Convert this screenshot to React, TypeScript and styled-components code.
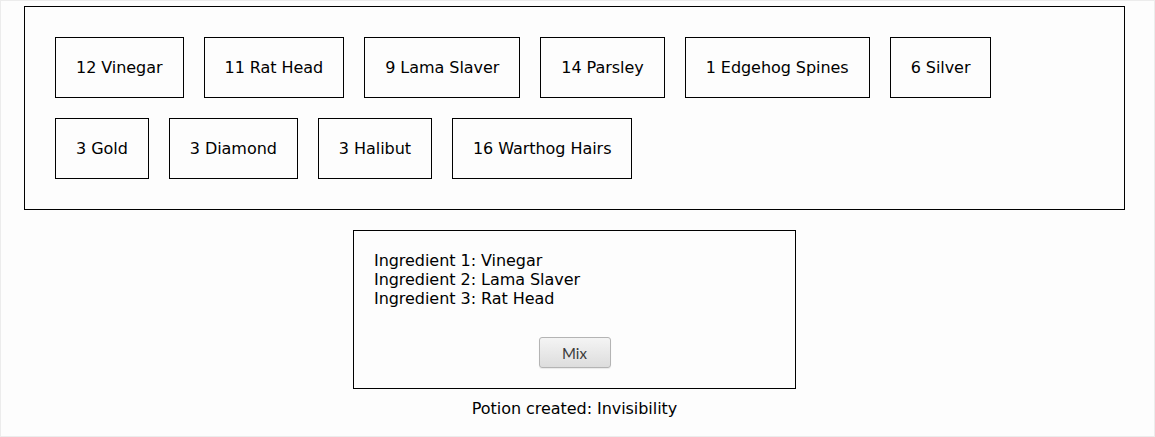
import React from "react";
import styled, { createGlobalStyle } from "styled-components";

const Global = createGlobalStyle`
  html, body { margin: 0; padding: 0; background: #fdfdfd; }
  body { font-family: "DejaVu Sans", sans-serif; font-size: 16px; color: #000; letter-spacing: -0.05px; }
`;

const Page = styled.div`
  box-sizing: border-box;
  width: 1155px;
  height: 437px;
  border: 1px solid #ececec;
  padding: 5px 29px 0 23px;
  background: #fdfdfd;
`;

const Inventory = styled.div`
  border: 1px solid #000;
  padding: 30px;
  display: flex;
  flex-wrap: wrap;
  gap: 20px;
`;

const Ingredient = styled.div`
  border: 1px solid #000;
  padding: 20px;
  line-height: 19px;
  white-space: nowrap;
`;

const Cauldron = styled.div`
  margin: 20px auto 0;
  border: 1px solid #000;
  padding: 20px;
  box-sizing: border-box;
  width: 443px;
  display: flex;
  flex-direction: column;
`;

const Line = styled.div`
  line-height: 19px;
`;

const MixButton = styled.button`
  align-self: center;
  margin-top: 29px;
  width: 72px;
  height: 31px;
  border: 1px solid #b4b4b4;
  border-radius: 3px;
  background: linear-gradient(#f4f4f4, #dddddd);
  box-shadow: 0 1px 1px rgba(0, 0, 0, 0.08);
  font-family: Lato, sans-serif;
  font-size: 15px;
  letter-spacing: 0;
  color: #3a3a3a;
  padding: 0;
`;

const Result = styled.div`
  text-align: center;
  margin-top: 10px;
  line-height: 19px;
`;

const items = [
  "12 Vinegar",
  "11 Rat Head",
  "9 Lama Slaver",
  "14 Parsley",
  "1 Edgehog Spines",
  "6 Silver",
  "3 Gold",
  "3 Diamond",
  "3 Halibut",
  "16 Warthog Hairs",
];

const chosen = ["Vinegar", "Lama Slaver", "Rat Head"];

export default function App() {
  return (
    <>
      <Global />
      <Page>
        <Inventory>
          {items.map((it) => (
            <Ingredient key={it}>{it}</Ingredient>
          ))}
        </Inventory>
        <Cauldron>
          {chosen.map((c, i) => (
            <Line key={c}>
              Ingredient {i + 1}: {c}
            </Line>
          ))}
          <MixButton>Mix</MixButton>
        </Cauldron>
        <Result>Potion created: Invisibility</Result>
      </Page>
    </>
  );
}
